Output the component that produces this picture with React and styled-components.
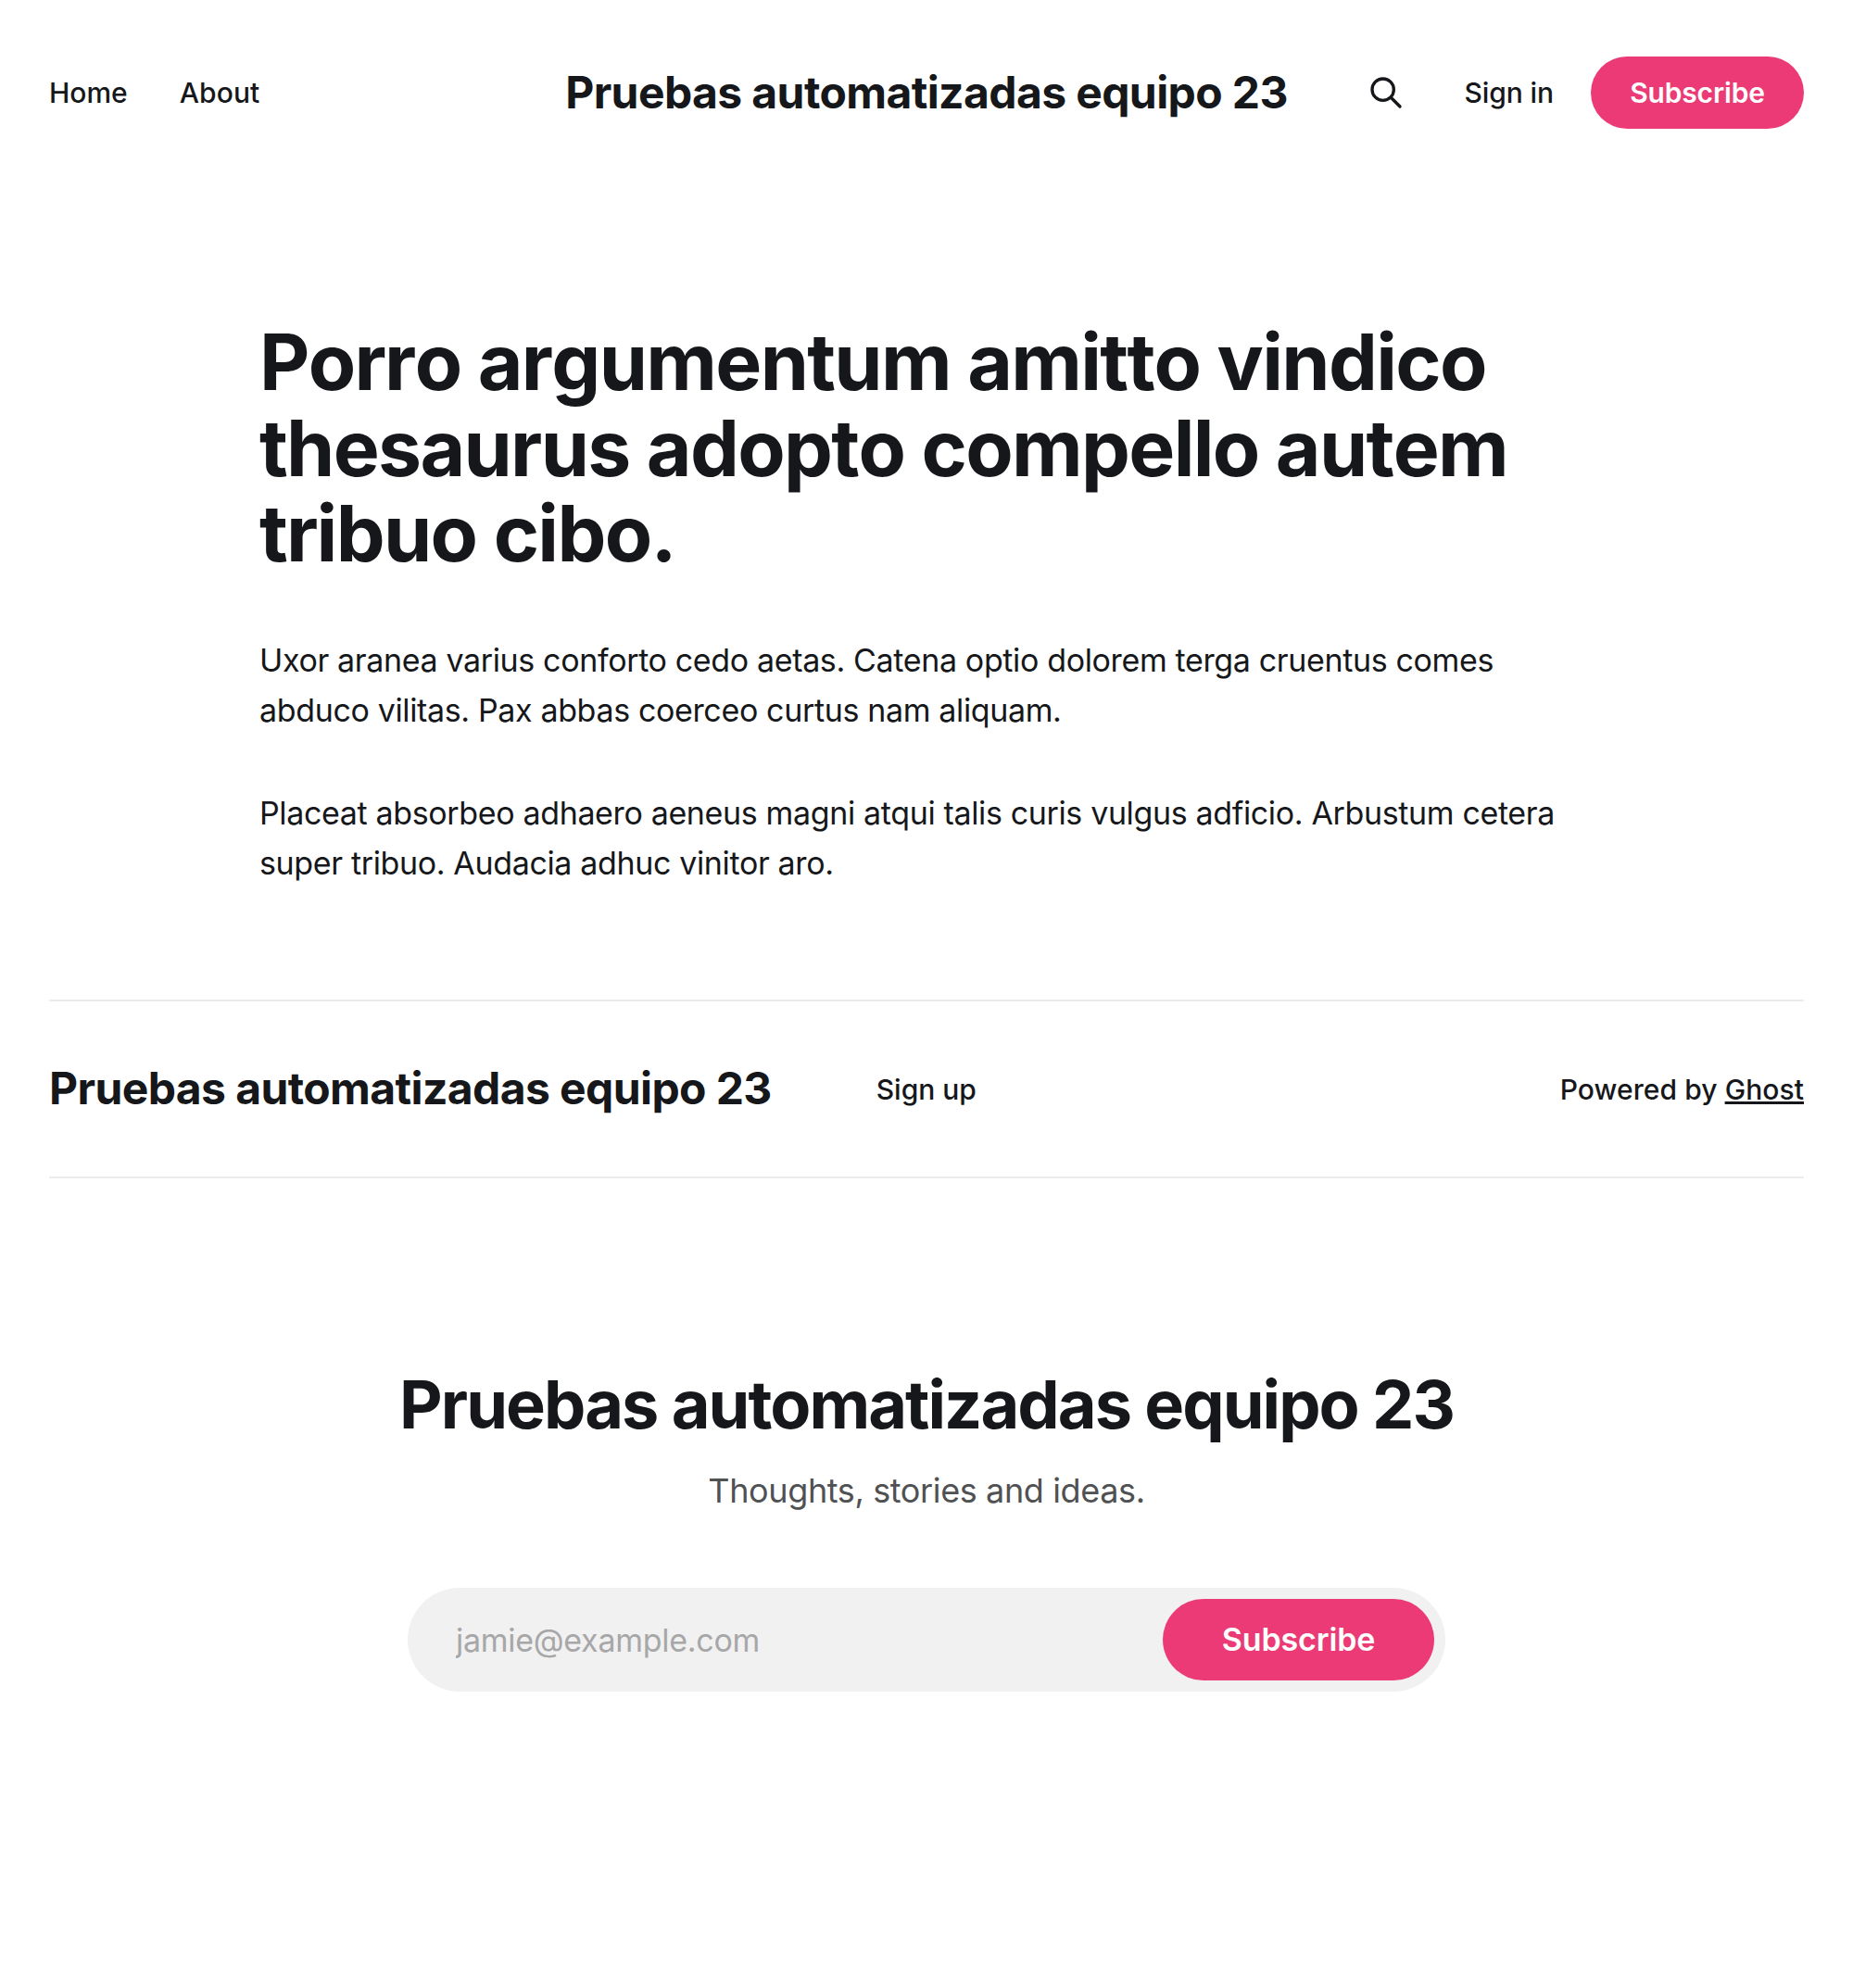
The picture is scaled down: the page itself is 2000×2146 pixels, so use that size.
import React from 'react';
import styled, { createGlobalStyle } from 'styled-components';

const Global = createGlobalStyle`
  * { box-sizing: border-box; }
  body { margin: 0; background: #fff; color: #15171a; font-family: Inter, "Liberation Sans", sans-serif; -webkit-font-smoothing: antialiased; }
  h1, h2, p { margin: 0; }
  a { color: inherit; text-decoration: none; }
`;
const Page = styled.div`min-height: 2146px; padding: 0 53px;`;
const Header = styled.header`
  height: 200px; display: grid; grid-template-columns: 1fr auto 1fr; align-items: center; column-gap: 53px;
`;
const Nav = styled.nav`display: flex; gap: 56px;`;
const Link = styled.a`font-size: 30px; font-weight: 500; line-height: 48px; letter-spacing: ${p => p.$track || 0}px; white-space: nowrap;`;
const Brand = styled.a`font-size: 48px; font-weight: 700; line-height: 56px; letter-spacing: -0.6px; white-space: nowrap;`;
const Actions = styled.div`display: flex; align-items: center; justify-content: flex-end;`;
const SearchButton = styled.button`
  display: flex; border: 0; padding: 0; background: none; color: inherit; margin-right: 65px;
  svg { width: 40px; height: 40px; display: block; }
`;
const Button = styled.button`
  border: 0; border-radius: 60px; background: #eb3a75; color: #fff; font-family: inherit; font-weight: 600; padding: 0 0 ${p => p.$lift || 0}px;
  width: ${p => p.$w}px; height: ${p => p.$h}px; font-size: ${p => p.$size}px; letter-spacing: -0.15px;
`;
const Subscribe = styled(Button)`margin-left: 40px;`;
const Article = styled.main`width: 1440px; margin: 0 auto; padding-top: 145px; height: 879px;`;
const Title = styled.h1`font-size: 84px; font-weight: 700; line-height: 92.6px; letter-spacing: -1.68px; padding-bottom: 63.2px; font-kerning: none; font-feature-settings: "calt" 0;`;
const Paragraph = styled.p`font-size: 34px; line-height: 54.4px; margin-bottom: 56.2px; letter-spacing: -0.36px;`;
const Footer = styled.footer`
  height: 193px; border-top: 2px solid #ebebeb; border-bottom: 2px solid #ebebeb; display: flex; align-items: center;
`;
const FooterBrand = styled(Brand)`padding-bottom: 2px;`;
const SignUp = styled(Link)`margin-left: 113px; flex: 1;`;
const Underlined = styled.a`text-decoration: underline; text-decoration-thickness: 3px; text-underline-offset: 2px;`;
const Signup = styled.section`display: flex; flex-direction: column; align-items: center; padding-top: 198px;`;
const SignupTitle = styled.h2`font-size: 72px; font-weight: 700; line-height: 92px; letter-spacing: -1.92px;`;
const Tagline = styled.p`font-size: 36px; line-height: 50px; margin-top: 22px; letter-spacing: -0.38px; color: #505153;`;
const Form = styled.form`
  width: 1120px; height: 112px; margin-top: 80px; padding: 12px 12px 12px 52px; border-radius: 56px; background: #f1f1f1; display: flex; align-items: center;
`;
const Email = styled.input`
  flex: 1; border: 0; outline: 0; padding: 0; background: none; font: 400 34px Inter, sans-serif; letter-spacing: -0.28px;
  &::placeholder { color: #a7a7a8; opacity: 1; }
`;

export default function App() {
  return (
    <>
      <Global />
      <Page>
        <Header>
          <Nav><Link>Home</Link><Link $track={0.1}>About</Link></Nav>
          <Brand>Pruebas automatizadas equipo 23</Brand>
          <Actions>
            <SearchButton aria-label="Search">
              <svg fill="none" viewBox="0 0 24 24" stroke="currentColor" strokeWidth="2"><path strokeLinecap="round" strokeLinejoin="round" d="M21 21l-6-6m2-5a7 7 0 11-14 0 7 7 0 0114 0z" /></svg>
            </SearchButton>
            <Link $track={-0.1}>Sign in</Link>
            <Subscribe $w={230} $h={78} $size={30}>Subscribe</Subscribe>
          </Actions>
        </Header>
        <Article>
          <Title>Porro argumentum amitto vindico thesaurus adopto compello autem tribuo cibo.</Title>
          <Paragraph>Uxor aranea varius conforto cedo aetas. Catena optio dolorem terga cruentus comes abduco vilitas. Pax abbas coerceo curtus nam aliquam.</Paragraph>
          <Paragraph>Placeat absorbeo adhaero aeneus magni atqui talis curis vulgus adficio. Arbustum cetera super tribuo. Audacia adhuc vinitor aro.</Paragraph>
        </Article>
        <Footer>
          <FooterBrand>Pruebas automatizadas equipo 23</FooterBrand>
          <SignUp>Sign up</SignUp>
          <Link as="span" $track={0.08}>Powered by <Underlined>Ghost</Underlined></Link>
        </Footer>
        <Signup>
          <SignupTitle>Pruebas automatizadas equipo 23</SignupTitle>
          <Tagline>Thoughts, stories and ideas.</Tagline>
          <Form>
            <Email placeholder="jamie@example.com" />
            <Button type="button" $w={293} $h={88} $size={34} $lift={2}>Subscribe</Button>
          </Form>
        </Signup>
      </Page>
    </>
  );
}
